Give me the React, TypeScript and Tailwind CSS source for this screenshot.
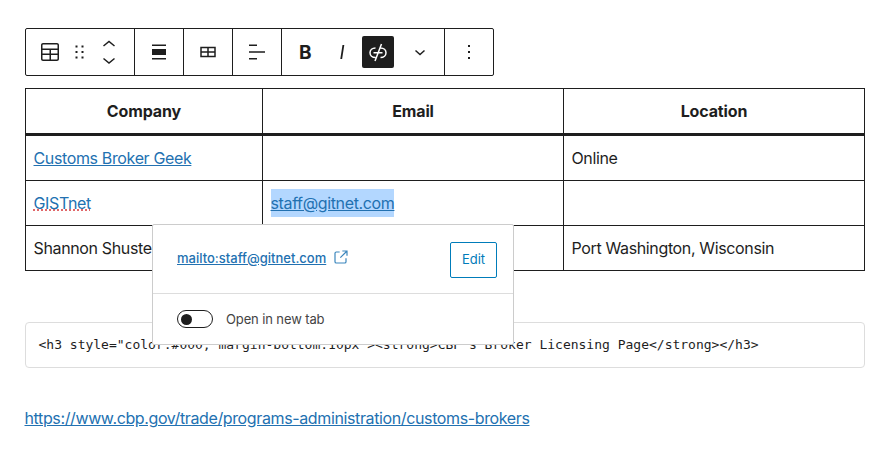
const ui = "font-['Inter','Noto_Sans',sans-serif]";

function Divider() {
  return <div className="w-px self-stretch bg-[#1e1e1e]" />;
}

function TableIcon() {
  return (
    <svg width="24" height="24" viewBox="0 0 24 24" fill="currentColor">
      <path d="M19 3H5c-1.100 0-2 .9-2 2v14c0 1.100.9 2 2 2h14c1.100 0 2-.9 2-2V5c0-1.100-.9-2-2-2zM5 4.500h14c.3 0 .5.2.5.5v3.500h-15V5c0-.3.2-.5.5-.5zm8 5.500h6.500v3.500H13V10zm-1.500 3.500h-7V10h7v3.500zm-7 5.500v-4h7v4.500H5c-.3 0-.5-.2-.5-.5zm14.500.5h-6V15h6.500v4c0 .3-.2.500-.5.500z" />
    </svg>
  );
}

function Toolbar() {
  return (
    <div className="flex h-12 w-[469px] items-stretch rounded-[2px] border border-[#1e1e1e] bg-white text-[#1e1e1e]">
      <div className="flex w-[108px] items-center pl-[12px]">
        <TableIcon />
        <svg width="18" height="24" viewBox="0 0 18 24" fill="currentColor" className="ml-[8px]">
          <path d="M5.500 5.500h2v2h-2zM5.500 11h2v2h-2zM5.500 16.500h2v2h-2zM11.500 5.500h2v2h-2zM11.500 11h2v2h-2zM11.500 16.500h2v2h-2z" />
        </svg>
        <svg width="18" height="36" viewBox="0 0 18 36" fill="none" stroke="currentColor" strokeWidth="1.500" className="ml-[12px]">
          <path d="M3.500 12 9 7.500l5.500 4.500M3.500 24.500 9 29l5.500-4.500" />
        </svg>
      </div>
      <Divider />
      <div className="flex w-[48px] items-center justify-center">
        <svg width="24" height="24" viewBox="0 0 24 24" fill="currentColor">
          <path d="M5 4.500h14V6H5zM5 9h14v6H5zM5 18h14v1.500H5z" />
        </svg>
      </div>
      <Divider />
      <div className="flex w-[48px] items-center justify-center">
        <svg width="24" height="24" viewBox="0 0 24 24" fill="none" stroke="currentColor" strokeWidth="1.500">
          <path d="M5 7.500h14v9H5zM12 7.500v9M5 12h14" />
        </svg>
      </div>
      <Divider />
      <div className="flex w-[48px] items-center justify-center">
        <svg width="24" height="24" viewBox="0 0 24 24" fill="currentColor">
          <path d="M4 4.500h8V6H4zM4 11.250h16v1.500H4zM4 18h8v1.500H4z" />
        </svg>
      </div>
      <Divider />
      <div className="relative flex w-[162px] items-center">
        <span className={`${ui} ml-[17px] text-[19px] font-bold leading-none`}>B</span>
        <svg width="24" height="24" viewBox="0 0 24 24" fill="currentColor" className="ml-[18px]">
          <path d="M12.500 5 10.300 19h1.800L14.300 5z" />
        </svg>
        <div className="ml-[8px] flex h-8 w-8 items-center justify-center rounded-[2px] bg-[#1e1e1e] text-white">
          <svg width="24" height="24" viewBox="0 0 24 24" fill="none" stroke="currentColor" strokeWidth="1.500">
            <path d="M9.500 8C6.200 8 4 10 4 12.700S6.200 17.500 9.500 17.500M14.500 8c3.300 0 5.500 2 5.500 4.700s-2.200 4.800-5.500 4.800M7.500 12.700h9M15.500 4 9 21" />
          </svg>
        </div>
        <svg width="24" height="24" viewBox="0 0 24 24" fill="none" stroke="currentColor" strokeWidth="1.500" className="ml-[14px]">
          <path d="m7.500 10.500 4.500 4 4.500-4" />
        </svg>
      </div>
      <Divider />
      <div className="flex flex-1 items-center justify-center">
        <svg width="24" height="24" viewBox="0 0 24 24" fill="currentColor">
          <path d="M11 5h2v2h-2zM11 11h2v2h-2zM11 17h2v2h-2z" />
        </svg>
      </div>
    </div>
  );
}

function Popover() {
  return (
    <div className={`${ui} absolute left-[127px] top-[136px] z-10 w-[362px] rounded-[2px] border border-[#ccc] bg-white tracking-normal`}>
      <div className="flex h-[69px] items-center border-b border-[#ddd] pl-[24px] pr-[16px]">
        <a href="#" className="mb-[1px] text-[13px] font-medium text-[#2271b1] underline">mailto:staff@gitnet.com</a>
        <svg width="16" height="16" viewBox="0 0 24 24" fill="none" stroke="#3b86bd" strokeWidth="1.800" className="ml-[7px] mb-[5px]">
          <path d="M10 4.500H5a2 2 0 0 0-2 2V19a2 2 0 0 0 2 2h12.500a2 2 0 0 0 2-2v-5M14 3h7v7M21 3 11 13" />
        </svg>
        <div className="ml-auto mt-[2px] flex h-9 w-[47px] items-center justify-center rounded-[2px] border border-[#007cba] text-[13px] text-[#007cba]">Edit</div>
      </div>
      <div className="flex h-[50px] items-center pl-[24px]">
        <div className="flex h-[18px] w-9 items-center rounded-full border border-[#1e1e1e] pl-[3px]">
          <div className="h-[11px] w-[11px] rounded-full bg-[#1e1e1e]" />
        </div>
        <span className="ml-[13px] mt-[1px] text-[13px] tracking-[-0.12px] text-[#444]">Open in new tab</span>
      </div>
    </div>
  );
}

const cell = "h-[45px] border border-[#1e1e1e] pl-[7.500px] pr-[8px] align-middle tracking-[-0.36px]";
const link = "text-[#2271b1] underline";
const head = "border border-b-[3px] border-[#1e1e1e] px-[8px] pb-[1px] font-bold tracking-[-0.12px]";

export default function App() {
  return (
    <div className={`${ui} min-h-screen bg-white px-[25px] pt-[28px] text-[16px] text-[#1e1e1e]`}>
      <Toolbar />
      <div className="relative mt-[12px]">
        <table className="w-[840px] table-fixed border-collapse">
          <thead>
            <tr>
              <th className={`${head} h-[46px] w-[237px]`}>Company</th>
              <th className={`${head} w-[301px]`}>Email</th>
              <th className={head}>Location</th>
            </tr>
          </thead>
          <tbody>
            <tr>
              <td className={`${cell} h-[46px] pb-[1px]`}><a href="#" className={link}>Customs Broker Geek</a></td>
              <td className={`${cell} h-[46px]`}></td>
              <td className={`${cell} h-[46px] pb-[1px]`}>Online</td>
            </tr>
            <tr>
              <td className={cell}>
                <a href="#" className="text-[#2271b1] underline decoration-[#d63638] decoration-dotted">GISTnet</a>
              </td>
              <td className={cell}>
                <a href="#" className="bg-[#b3d7ff] py-[4px] text-[#2271b1] underline">staff@gitnet.com</a>
              </td>
              <td className={cell}></td>
            </tr>
            <tr>
              <td className={`${cell} whitespace-nowrap`}>Shannon Shuster</td>
              <td className={cell}></td>
              <td className={cell}>Port Washington, Wisconsin</td>
            </tr>
          </tbody>
        </table>
        <Popover />
      </div>
      <div className="mt-[51px] flex h-[46px] w-[840px] items-center rounded-[4px] border border-[#ddd] pl-[12.500px] font-['DejaVu_Sans_Mono',monospace] text-[13px] text-[#1e1e1e]">
        {'<h3 style="color:#000; margin-bottom:10px"><strong>CBP\'s Broker Licensing Page</strong></h3>'}
      </div>
      <a href="#" className="ml-[-0.500px] mt-[38px] inline-block tracking-[-0.375px] text-[#2271b1] underline">https://www.cbp.gov/trade/programs-administration/customs-brokers</a>
    </div>
  );
}
